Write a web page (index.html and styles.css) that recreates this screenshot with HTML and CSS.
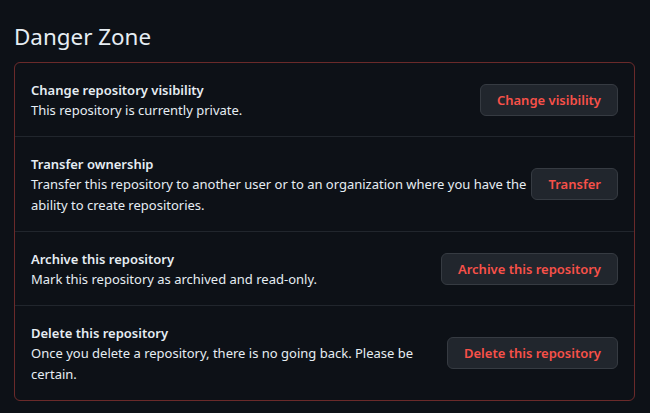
FILE: index.html
```html
<!DOCTYPE html>
<html lang="en">

<head>
    <meta charset="UTF-8">
    <meta name="viewport" content="width=device-width, initial-scale=1.0">
    <title>Danger Zone</title>
    <link rel="stylesheet" href="styles.css">
</head>

<body>
    <div class="page">
        <h2 class="subhead">Danger Zone</h2>
        <div class="danger-box">
            <div class="box-row">
                <div class="row-text">
                    <strong>Change repository visibility</strong>
                    <p>This repository is currently private.</p>
                </div>
                <button class="btn-danger">Change visibility</button>
            </div>
            <div class="box-row">
                <div class="row-text">
                    <strong>Transfer ownership</strong>
                    <p>Transfer this repository to another user or to an organization where you have the ability to create repositories.</p>
                </div>
                <button class="btn-danger">Transfer</button>
            </div>
            <div class="box-row">
                <div class="row-text">
                    <strong>Archive this repository</strong>
                    <p>Mark this repository as archived and read-only.</p>
                </div>
                <button class="btn-danger">Archive this repository</button>
            </div>
            <div class="box-row">
                <div class="row-text">
                    <strong>Delete this repository</strong>
                    <p>Once you delete a repository, there is no going back. Please be certain.</p>
                </div>
                <button class="btn-danger">Delete this repository</button>
            </div>
        </div>
    </div>
</body>

</html>
```

FILE: styles.css
```css
* {
    box-sizing: border-box;
}

body {
    margin: 0;
    background-color: #0d1117;
    color: #e6edf3;
    font-family: "Noto Sans", "Open Sans", sans-serif;
    font-size: 13px;
    line-height: 21px;
}

.page {
    padding: 19px 15px 0 14px;
}

.subhead {
    margin: 0 0 7px 0;
    font-size: 22.4px;
    font-weight: 400;
    line-height: 36px;
}

.danger-box {
    border: 1px solid rgba(248, 81, 73, 0.4);
    border-radius: 6px;
}

.box-row {
    display: flex;
    align-items: center;
    padding: 17px 16px 15px;
    border-top: 1px solid #21262d;
}

.box-row:first-child {
    border-top: none;
}

.row-text {
    flex: 1 1 auto;
}

.row-text strong {
    display: block;
    font-weight: 600;
    line-height: 20px;
}

.row-text p {
    margin: 0;
}

.btn-danger {
    flex-shrink: 0;
    height: 32px;
    margin-top: -2px;
    padding: 0 16px;
    background-color: #21262d;
    border: 1px solid #363b42;
    border-radius: 6px;
    color: #f85149;
    font-family: inherit;
    font-size: 13px;
    font-weight: 600;
}
```
